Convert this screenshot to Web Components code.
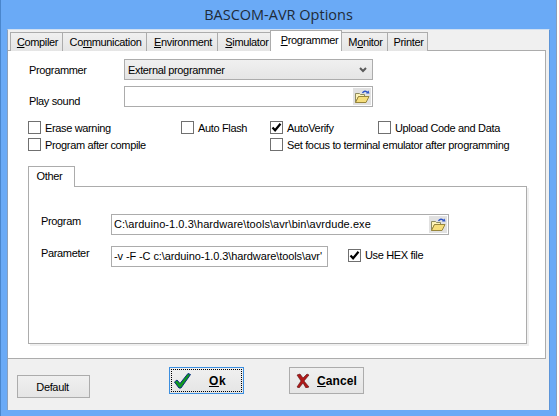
<!DOCTYPE html>
<html><head><meta charset="utf-8"><style>
html,body{margin:0;padding:0;background:#fff;width:559px;height:416px;overflow:hidden}
body{font:11px "Liberation Sans",Arial,sans-serif;color:#000;letter-spacing:-.35px}
</style></head><body>
<template id="t-win"><style>
:host{display:flex;flex-direction:column;width:557px;height:416px;box-sizing:border-box;background:#6aaaf6;border-left:1px solid #4a86cc;border-right:1px solid #8a9db5;padding:0 6px 6px 6px}
.title{height:29px;display:flex;align-items:center;justify-content:center;font:14.5px "Open Sans","Noto Sans",sans-serif;letter-spacing:0;color:#1f2a38;flex:none}
.client{flex:1;background:#f0f0f0;display:flex;flex-direction:column;min-height:0;border:1px solid #5d95d8;border-left-color:#8aa0bc;border-bottom:none;border-top-color:#cfdff2}
</style><div class="title"><slot name="title"></slot></div><div class="client"><slot></slot></div></template>
<template id="t-tabs"><style>
:host{display:flex;flex-direction:column;height:329px;flex:none;padding:0 3px 0 0;box-sizing:border-box}
.bar{display:flex;height:21px;padding-left:2px;flex:none;align-items:flex-end;position:relative;z-index:1;margin-bottom:-1px}
.page{flex:1;background:#fff;border-top:1px solid #acacac;border-bottom:1px solid #acacac;border-right:1px solid #acacac;min-height:0;display:flex;flex-direction:column}
</style><div class="bar"><slot name="tab"></slot></div><div class="page"><slot></slot></div></template>
<template id="t-tab"><style>
:host{display:flex;box-sizing:border-box;height:19px;align-items:center;justify-content:center;background:linear-gradient(#f0f0f0,#e5e5e5);border:1px solid #acacac;border-bottom:none;margin-right:-1px;padding:0 0 1px 2px}
:host([active]){height:21px;background:#fff;position:relative;z-index:2;padding:0 0 3px 7px}
</style><slot></slot></template>
<template id="t-field"><style>
:host{display:flex;box-sizing:border-box;height:21px;border:1px solid #acacac;background:#fff;align-items:center;justify-content:space-between;padding-left:2px;white-space:nowrap;overflow:hidden;flex:none;letter-spacing:-.1px}
.t{overflow:hidden;flex:1;padding-bottom:1px}
.btn{display:none;width:18px;height:17px;margin-right:1px;box-sizing:border-box;background:#e1e1e1;align-items:center;justify-content:center;flex:none}
:host([browse]) .btn{display:flex}
</style><span class="t"><slot></slot></span><span class="btn"><svg width="16" height="14" viewBox="0 0 16 14"><path d="M1.5 3.5h4l1 1h4v2h-6l-3 6z" fill="#fdf3b8" stroke="#8d8a60"/><path d="M1.5 12.5l3-6h10.500l-3 6z" fill="#f6de7c" stroke="#98863c"/><path d="M8.500 3C9.500 1 12 .5 13.500 2.500" fill="none" stroke="#2f55c8" stroke-width="1.400"/><path d="M12 3.500h3.500L14.500 .5z" fill="#2f55c8"/></svg></span></template>
<template id="t-select"><style>
:host{display:flex;box-sizing:border-box;height:21px;border:1px solid #acacac;background:linear-gradient(#f0f0f0,#e5e5e5);align-items:center;justify-content:space-between;padding:0 5px 0 3px}
</style><span><slot></slot></span><svg width="8" height="6" viewBox="0 0 8 6"><path d="M1 1l3 3 3-3" fill="none" stroke="#5a5a5a" stroke-width="2"/></svg></template>
<template id="t-check"><style>
:host{display:inline-flex;align-items:center;gap:4px;white-space:nowrap;height:15px}
.b{width:13px;height:13px;box-sizing:border-box;border:1px solid #707070;background:#fff;display:flex;flex:none}
svg{display:none}
:host([checked]) svg{display:block}
</style><span class="b"><svg width="11" height="11" viewBox="0 0 11 11"><path d="M1.500 5.500l2.600 2.800L9.500 1.800" fill="none" stroke="#000" stroke-width="2.200"/></svg></span><span><slot></slot></span></template>
<template id="t-btn"><style>
:host{display:flex;box-sizing:border-box;border:1px solid #acacac;background:linear-gradient(#f0f0f0,#e5e5e5);align-items:center;justify-content:center;flex:none}
:host([focus]){border-color:#3c8fe0;padding:1px}
.i{flex:1;align-self:stretch;display:flex;align-items:center;justify-content:center;box-sizing:border-box}
:host([focus]) .i{border:1px dotted #000}
</style><span class="i"><slot></slot></span></template>
<bas-window>
<span slot="title">BASCOM-AVR Options</span>
<bas-tabs>
<bas-tab slot="tab" style="width:53px"><span><u>C</u>ompiler</span></bas-tab>
<bas-tab slot="tab" style="width:85px"><span>Co<u>m</u>munication</span></bas-tab>
<bas-tab slot="tab" style="width:72px"><span><u>E</u>nvironment</span></bas-tab>
<bas-tab slot="tab" style="width:54px;padding-left:6px"><span><u>S</u>imulator</span></bas-tab>
<bas-tab slot="tab" active style="width:72px"><span><u>P</u>rogrammer</span></bas-tab>
<bas-tab slot="tab" style="width:47px"><span>M<u>o</u>nitor</span></bas-tab>
<bas-tab slot="tab" style="width:41px"><span>Printer</span></bas-tab>
<div style="padding:8px 0 0 21px;display:flex;flex-direction:column">
  <div style="display:grid;grid-template-columns:95px 249px;row-gap:6px;align-items:center">
    <span>Programmer</span><bas-select>External programmer</bas-select>
    <span style="padding-top:9px">Play sound</span><bas-field browse></bas-field>
  </div>
  <div style="display:grid;grid-template-columns:153px 89px 108px auto;row-gap:2px;margin:13px 0 0 -1px">
    <bas-check>Erase warning</bas-check><bas-check>Auto Flash</bas-check><bas-check checked>AutoVerify</bas-check><bas-check>Upload Code and Data</bas-check>
    <bas-check>Program after compile</bas-check><span></span><bas-check style="grid-column:3/5">Set focus to terminal emulator after programming</bas-check>
  </div>
  <div style="margin:14px 0 0 -1px;width:499px;display:flex;flex-direction:column;height:178px">
    <div style="display:flex;height:21px;flex:none;margin-bottom:-1px;position:relative;z-index:1"><div style="width:47px;box-sizing:border-box;border:1px solid #acacac;border-bottom:none;display:flex;align-items:center;justify-content:center;background:#fff;padding:0 4px 3px 0">Other</div></div>
    <div style="flex:1;border:1px solid #acacac;padding:27px 0 0 12px;box-sizing:border-box;box-shadow:2px 2px 0 #f0f0f0">
      <div style="display:grid;grid-template-columns:70px 338px;row-gap:11px;align-items:center">
        <span style="padding-bottom:7px">Program</span><bas-field browse style="letter-spacing:.06px">C:\arduino-1.0.3\hardware\tools\avr\bin\avrdude.exe</bas-field>
        <span style="padding-bottom:7px">Parameter</span>
        <div style="display:flex;align-items:center;gap:20px"><bas-field style="width:217px">-v -F -C c:\arduino-1.0.3\hardware\tools\avr'</bas-field><bas-check checked style="padding-bottom:3px">Use HEX file</bas-check></div>
      </div>
    </div>
  </div>
</div>
</bas-tabs>
<div style="display:flex;padding:8px 0 0 9px;align-items:flex-start">
  <bas-btn style="width:73px;height:23px;margin-top:8px"><span style="margin-right:2px">Default</span></bas-btn>
  <bas-btn focus style="width:75px;height:27px;margin-left:79px;font:bold 12px 'Liberation Sans',sans-serif;letter-spacing:.6px"><span style="display:flex;align-items:center;width:100%"><svg width="17" height="16" viewBox="0 0 17 16" style="margin-left:2px"><path d="M.5 9l2.500-2 3 3.500L14 .5l2.500 1L7 15H5z" fill="#0f9a1d" stroke="#0a2a80" stroke-width="1"/></svg><span style="margin-left:18px"><u>O</u>k</span></span></bas-btn>
  <bas-btn style="width:75px;height:27px;margin-left:45px;font:bold 12px 'Liberation Sans',sans-serif;letter-spacing:.1px"><svg width="14" height="15" viewBox="0 0 14 15" style="margin-right:7px"><path d="M1 2l3-1 3 4 4-4 2 1-5 6 5 6-3 1-3-5-4 5-2-1 4-6z" fill="#b01818" stroke="#5a1010" stroke-width=".6"/></svg><span><u>C</u>ancel</span></bas-btn>
</div>
</bas-window>
<script>
for (const [tag,id] of [['bas-window','t-win'],['bas-tabs','t-tabs'],['bas-tab','t-tab'],['bas-field','t-field'],['bas-select','t-select'],['bas-check','t-check'],['bas-btn','t-btn']]) {
  customElements.define(tag, class extends HTMLElement {
    constructor(){super();this.attachShadow({mode:'open'}).appendChild(document.getElementById(id).content.cloneNode(true));}
  });
}
</script>
</body></html>
